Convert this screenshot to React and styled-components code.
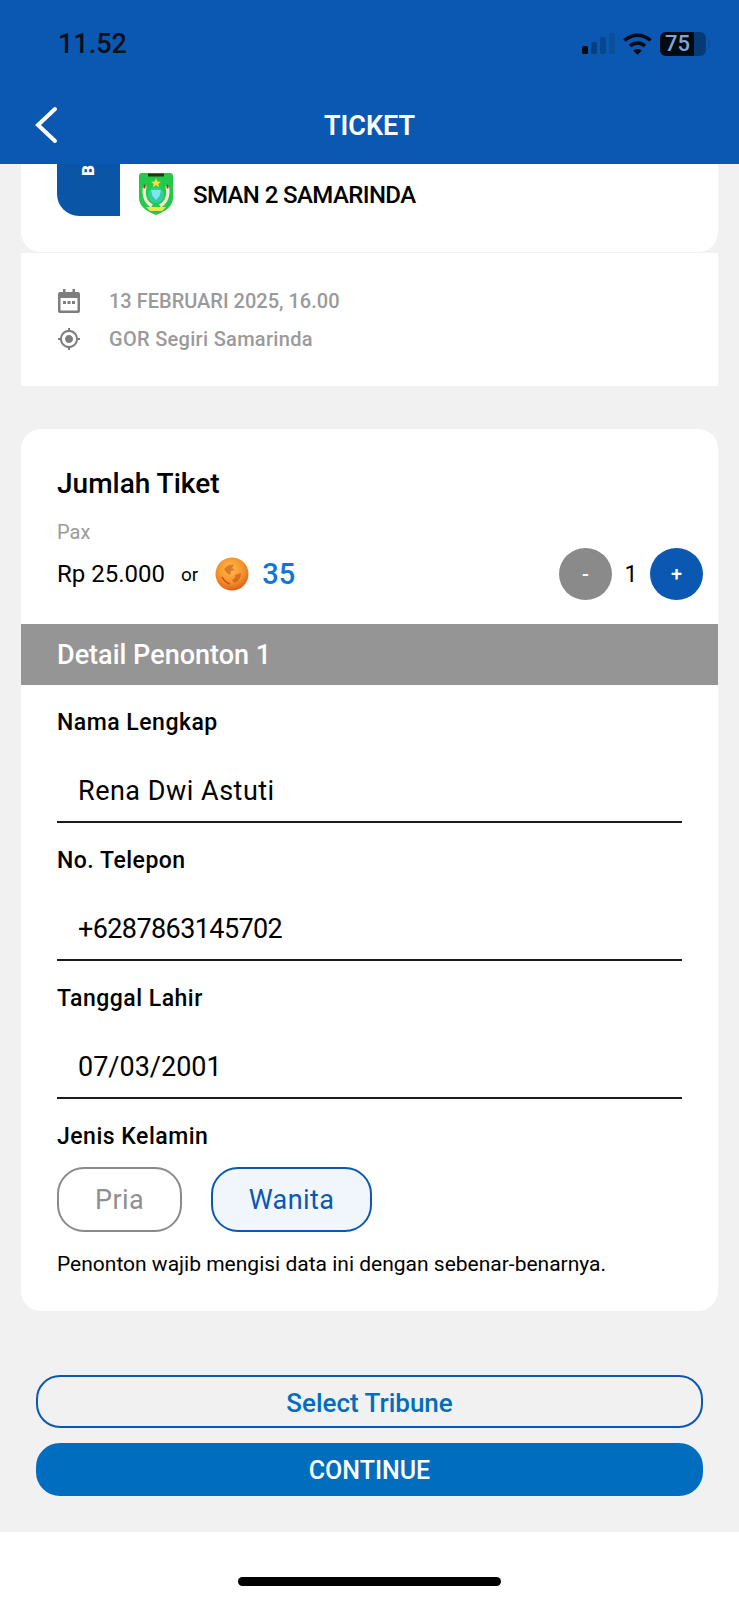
import React from "react";
import styled, { createGlobalStyle } from "styled-components";

const GlobalStyle = createGlobalStyle`
  html, body {
    margin: 0;
    padding: 0;
    background: #fff;
  }
  * {
    box-sizing: border-box;
  }
`;

const Page = styled.div`
  width: 739px;
  height: 1600px;
  display: flex;
  flex-direction: column;
  overflow: hidden;
  background: #f1f1f1;
  color: #000;
  font-family: Roboto, "Liberation Sans", sans-serif;
`;

const Header = styled.header`
  height: 164px;
  flex: none;
  background: #0a58b2;
  display: flex;
  flex-direction: column;
`;

const StatusBar = styled.div`
  height: 90px;
  padding: 0 29px 2px 58px;
  display: flex;
  align-items: center;
  justify-content: space-between;
`;

const Time = styled.span`
  font-size: 27px;
  font-weight: 500;
  color: #06101c;
`;

const StatusIcons = styled.div`
  display: flex;
  align-items: center;
  gap: 8px;
`;

const Battery = styled.div`
  position: relative;
  width: 46px;
  height: 24px;
  border-radius: 6px;
  overflow: hidden;
  background: #063a77;
  display: flex;
  align-items: center;
  padding-left: 5px;
  font-size: 22px;
  line-height: 24px;
  font-weight: 500;
  color: #7fa6d6;
  &::before {
    content: "";
    position: absolute;
    inset: 0 12px 0 0;
    background: #020a14;
  }
  span {
    position: relative;
  }
`;

const BatteryCap = styled.div`
  width: 2px;
  height: 8px;
  margin-left: -6px;
  border-radius: 0 2px 2px 0;
  background: #0a4f9c;
`;

const NavBar = styled.div`
  position: relative;
  flex: 1;
  display: flex;
  align-items: center;
  justify-content: center;
  padding-bottom: 2px;
`;

const BackIcon = styled.svg`
  position: absolute;
  left: 34px;
  top: 16px;
  width: 26px;
  height: 38px;
`;

const Title = styled.h1`
  margin: 0;
  font-size: 27px;
  font-weight: 600;
  color: #fff;
`;

const Content = styled.main`
  flex: 1;
  padding: 0 21px;
  display: flex;
  flex-direction: column;
`;

const MatchCard = styled.section`
  height: 88px;
  background: #fff;
  border-radius: 0 0 20px 20px;
  padding-left: 36px;
  display: flex;
  align-items: flex-start;
`;

const TeamBlock = styled.div`
  width: 63px;
  height: 52px;
  background: #0a55a6;
  border-bottom-left-radius: 22px;
  display: flex;
  justify-content: center;
  padding-right: 0;
`;

const TeamInitial = styled.span`
  width: 13px;
  height: 13px;
  display: flex;
  align-items: center;
  justify-content: center;
  font-size: 17px;
  line-height: 13px;
  font-weight: 900;
  color: #fff;
  transform: rotate(-90deg);
`;

const TeamLogo = styled.svg`
  width: 36px;
  height: 44px;
  margin: 8px 19px 0 18px;
`;

const TeamName = styled.span`
  margin-top: 16px;
  font-size: 24px;
  line-height: 30px;
  font-weight: 500;
  letter-spacing: -0.6px;
`;

const InfoCard = styled.section`
  height: 133px;
  margin-top: 1px;
  margin-bottom: 43px;
  padding: 35px 0 0 36px;
  background: #fff;
  display: flex;
  flex-direction: column;
  gap: 12px;
`;

const InfoRow = styled.div`
  height: 26px;
  display: flex;
  align-items: center;
  gap: 28px;
  font-size: 20px;
  font-weight: 500;
  letter-spacing: ${(p) => p.$spacing || 0}px;
  color: #9a9a9a;
  svg {
    width: 24px;
    height: 26px;
    flex: none;
    color: #7d7d7d;
  }
`;

const TicketCard = styled.section`
  height: 882px;
  background: #fff;
  border-radius: 20px;
  display: flex;
  flex-direction: column;
`;

const Quantity = styled.div`
  height: 195px;
  padding: 38px 15px 0 36px;
  display: flex;
  flex-direction: column;
`;

const CardTitle = styled.h2`
  margin: 0;
  font-size: 28px;
  line-height: 34px;
  font-weight: 500;
`;

const Pax = styled.div`
  margin-top: 19px;
  font-size: 20px;
  line-height: 24px;
  color: #9a9a9a;
`;

const PriceRow = styled.div`
  margin-top: 4px;
  height: 52px;
  display: flex;
  align-items: center;
`;

const Price = styled.span`
  font-size: 24px;
`;

const Or = styled.span`
  margin: 0 17px 0 16px;
  font-size: 19px;
`;

const Coin = styled.svg`
  width: 34px;
  height: 34px;
`;

const Points = styled.span`
  margin-left: 13px;
  font-size: 29px;
  font-weight: 500;
  color: #1173dc;
`;

const Stepper = styled.div`
  margin-left: auto;
  display: flex;
  align-items: center;
`;

const StepButton = styled.button`
  width: 53px;
  height: 52px;
  padding: 0;
  border: 0;
  border-radius: 50%;
  background: ${(p) => (p.$active ? "#0a58b2" : "#8a8a8a")};
  color: #fff;
  font-family: inherit;
  font-size: 20px;
  font-weight: 500;
`;

const Count = styled.span`
  width: 38px;
  text-align: center;
  font-size: 23px;
`;

const SectionBar = styled.div`
  height: 61px;
  flex: none;
  padding-left: 36px;
  display: flex;
  align-items: center;
  background: #959595;
  color: #fff;
  font-size: 27px;
  font-weight: 500;
`;

const Form = styled.form`
  padding: 21px 36px 0;
  display: flex;
  flex-direction: column;
`;

const Field = styled.div`
  height: 138px;
  display: flex;
  flex-direction: column;
`;

const Label = styled.label`
  font-size: 23px;
  line-height: 34px;
  font-weight: 500;
  letter-spacing: 0.5px;
`;

const Value = styled.div`
  height: 82px;
  margin-top: 1px;
  padding: 32px 0 0 21px;
  border-bottom: 2px solid #1c1c1c;
  font-size: 27px;
  line-height: 36px;
  letter-spacing: ${(p) => p.$spacing}px;
`;

const PillRow = styled.div`
  margin-top: 13px;
  display: flex;
  gap: 29px;
`;

const Pill = styled.button`
  width: ${(p) => p.$width}px;
  height: 65px;
  padding: 0;
  border-radius: 27px;
  border: 2px solid ${(p) => (p.$active ? "#0a58b2" : "#8a8a8a")};
  background: ${(p) => (p.$active ? "#f0f6fc" : "#fff")};
  color: ${(p) => (p.$active ? "#0a58b2" : "#8f8f8f")};
  font-family: inherit;
  font-size: 27px;
  letter-spacing: 0.4px;
`;

const Note = styled.p`
  margin: 19px 0 0;
  font-size: 21px;
  line-height: 26px;
`;

const Actions = styled.div`
  margin-top: 64px;
  padding: 0 15px;
  display: flex;
  flex-direction: column;
  gap: 15px;
`;

const ActionButton = styled.button`
  height: 53px;
  padding: 2px 0 0;
  border-radius: 24px;
  border: 2px solid ${(p) => (p.$primary ? "#006dbf" : "#0a58b2")};
  background: ${(p) => (p.$primary ? "#006dbf" : "transparent")};
  color: ${(p) => (p.$primary ? "#fff" : "#006dbf")};
  font-family: inherit;
  font-size: ${(p) => (p.$primary ? 25 : 26)}px;
  font-weight: 500;
`;

const HomeArea = styled.div`
  height: 68px;
  flex: none;
  background: #fff;
  display: flex;
  justify-content: center;
  padding-top: 45px;
`;

const HomeIndicator = styled.div`
  width: 263px;
  height: 9px;
  border-radius: 5px;
  background: #000;
`;

const SignalIcon = () => (
  <svg width="33" height="24" viewBox="0 0 33 24">
    <rect x="0" y="14" width="6" height="8" rx="1.5" fill="#020a14" />
    <rect x="9" y="10" width="6" height="12" rx="1.5" fill="#06407f" />
    <rect x="18" y="5" width="6" height="17" rx="1.5" fill="#06478e" />
    <rect x="27" y="1" width="6" height="21" rx="1.5" fill="#0a4f9c" />
  </svg>
);

const WifiIcon = () => (
  <svg width="29" height="24" viewBox="0 0 29 24" fill="none" stroke="#020a14" strokeWidth="3.6">
    <path d="M1.5 8.5C9 1.5 20 1.5 27.5 8.5" />
    <path d="M7 14c4.5-4 10.500-4 15 0" />
    <path d="M14.500 23l-4.200-4.500c2.500-2 6-2 8.400 0z" fill="#020a14" stroke="none" />
  </svg>
);

const CalendarIcon = () => (
  <svg viewBox="0 0 24 26" fill="currentColor">
    <path d="M6 1h2.500v3h7V1H18v3h3a2 2 0 0 1 2 2v17a2 2 0 0 1-2 2H3a2 2 0 0 1-2-2V6a2 2 0 0 1 2-2h3zM3.500 10v12.500h17V10z" />
    <rect x="6" y="13" width="3" height="3" />
    <rect x="10.500" y="13" width="3" height="3" />
    <rect x="15" y="13" width="3" height="3" />
  </svg>
);

const TargetIcon = () => (
  <svg viewBox="0 0 24 24" fill="currentColor">
    <path d="M12 8c-2.210 0-4 1.790-4 4s1.790 4 4 4 4-1.790 4-4-1.790-4-4-4zm8.940 3c-.46-4.170-3.770-7.480-7.940-7.940V1h-2v2.060C6.830 3.520 3.520 6.830 3.060 11H1v2h2.060c.46 4.170 3.770 7.480 7.940 7.940V23h2v-2.060c4.170-.46 7.480-3.770 7.940-7.940H23v-2h-2.060zM12 19c-3.870 0-7-3.130-7-7s3.130-7 7-7 7 3.130 7 7-3.130 7-7 7z" />
  </svg>
);

const ShieldLogo = () => (
  <TeamLogo viewBox="0 0 36 44">
    <path d="M4 1h28q3 0 3 3v22c0 9-9 14-17 17C10 40 1 35 1 26V4q0-3 3-3z" fill="#22c94a" />
    <rect x="10" y="1.500" width="16" height="3" fill="#1c3a12" />
    <path d="M18 6l1.500 3.500 3.500.2-2.700 2.200 1 3.400-3.300-2-3.300 2 1-3.400L13 9.700l3.500-.2z" fill="#f4e23c" />
    <path d="M7 14c-2 8 0 16 7 20" fill="none" stroke="#f3ecd2" strokeWidth="3.500" />
    <path d="M29 14c2 8 0 16-7 20" fill="none" stroke="#f3ecd2" strokeWidth="3.500" />
    <path d="M7 13c-1 1-1 2 0 3M29 13c1 1 1 2 0 3" fill="none" stroke="#9c3b1e" strokeWidth="2" />
    <circle cx="18" cy="23" r="8" fill="#2fcf9a" />
    <path d="M13 18h10l-1.500 6-3.500 4-3.500-4z" fill="#7fe6ef" />
    <path d="M8 35h20l-4 4h-12z" fill="#f2e640" />
  </TeamLogo>
);

const CoinIcon = () => (
  <Coin viewBox="0 0 34 34">
    <defs>
      <radialGradient id="coinFill" cx="45%" cy="35%" r="70%">
        <stop offset="0%" stopColor="#ffc04d" />
        <stop offset="65%" stopColor="#f28a25" />
        <stop offset="100%" stopColor="#d4541a" />
      </radialGradient>
    </defs>
    <circle cx="17" cy="17" r="16.500" fill="url(#coinFill)" />
    <path d="M9 12c3-4 7-5 10-4l-2 3 3 2-4 1-1 4-3-2zM20 18l6-2c0 5-3 9-7 10l-2-3 3-2z" fill="#c9501a" opacity="0.6" />
    <path d="M7 20c2 4 5 6 8 7" fill="none" stroke="#c9501a" strokeWidth="1.500" />
  </Coin>
);

const FIELDS = [
  { label: "Nama Lengkap", value: "Rena Dwi Astuti", spacing: 0.5 },
  { label: "No. Telepon", value: "+6287863145702", spacing: -0.6 },
  { label: "Tanggal Lahir", value: "07/03/2001", spacing: 0 },
];

export default function App() {
  return (
    <Page>
      <GlobalStyle />
      <Header>
        <StatusBar>
          <Time>11.52</Time>
          <StatusIcons>
            <SignalIcon />
            <WifiIcon />
            <Battery>
              <span>75</span>
            </Battery>
            <BatteryCap />
          </StatusIcons>
        </StatusBar>
        <NavBar>
          <BackIcon viewBox="0 0 26 38" fill="none" stroke="#fff" strokeWidth="4" strokeLinecap="round">
            <path d="M21 3L4 19l17 16" />
          </BackIcon>
          <Title>TICKET</Title>
        </NavBar>
      </Header>

      <Content>
        <MatchCard>
          <TeamBlock>
            <TeamInitial>B</TeamInitial>
          </TeamBlock>
          <ShieldLogo />
          <TeamName>SMAN 2 SAMARINDA</TeamName>
        </MatchCard>

        <InfoCard>
          <InfoRow>
            <CalendarIcon />
            13 FEBRUARI 2025, 16.00
          </InfoRow>
          <InfoRow $spacing={0.3}>
            <TargetIcon />
            GOR Segiri Samarinda
          </InfoRow>
        </InfoCard>

        <TicketCard>
          <Quantity>
            <CardTitle>Jumlah Tiket</CardTitle>
            <Pax>Pax</Pax>
            <PriceRow>
              <Price>Rp 25.000</Price>
              <Or>or</Or>
              <CoinIcon />
              <Points>35</Points>
              <Stepper>
                <StepButton>-</StepButton>
                <Count>1</Count>
                <StepButton $active>+</StepButton>
              </Stepper>
            </PriceRow>
          </Quantity>

          <SectionBar>Detail Penonton 1</SectionBar>

          <Form>
            {FIELDS.map((field) => (
              <Field key={field.label}>
                <Label>{field.label}</Label>
                <Value $spacing={field.spacing}>{field.value}</Value>
              </Field>
            ))}
            <Label>Jenis Kelamin</Label>
            <PillRow>
              <Pill type="button" $width={125}>Pria</Pill>
              <Pill type="button" $width={161} $active>Wanita</Pill>
            </PillRow>
            <Note>Penonton wajib mengisi data ini dengan sebenar-benarnya.</Note>
          </Form>
        </TicketCard>

        <Actions>
          <ActionButton>Select Tribune</ActionButton>
          <ActionButton $primary>CONTINUE</ActionButton>
        </Actions>
      </Content>

      <HomeArea>
        <HomeIndicator />
      </HomeArea>
    </Page>
  );
}
